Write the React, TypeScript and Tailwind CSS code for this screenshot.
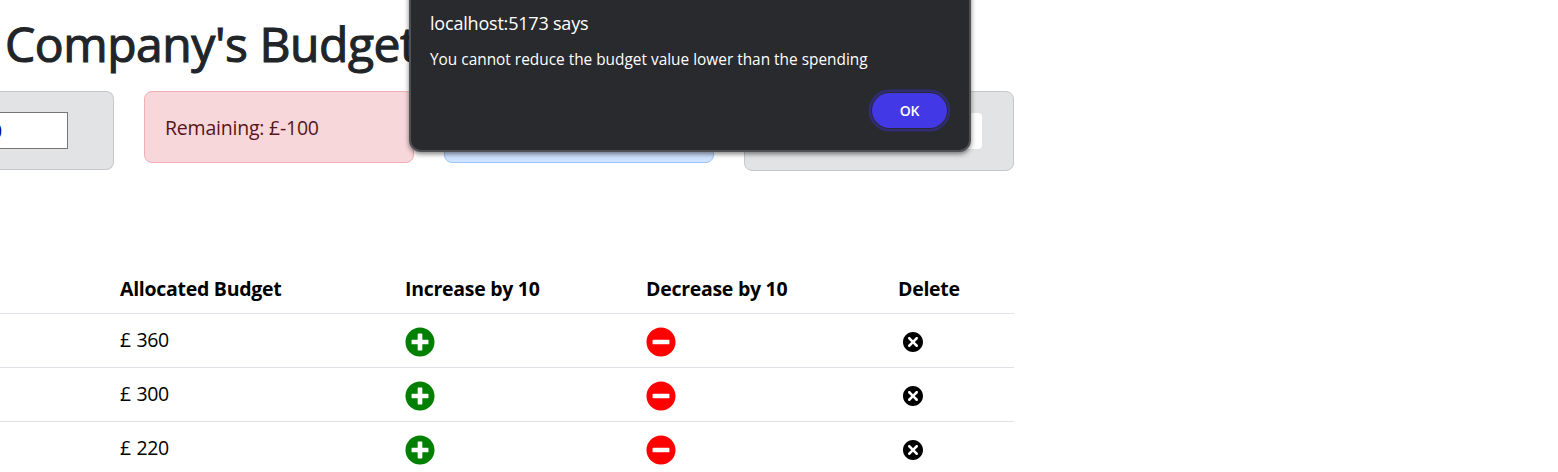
import { FaPlusCircle, FaMinusCircle } from "react-icons/fa";
import { TiDelete } from "react-icons/ti";

const rows = [360, 300, 220];

export default function App() {
  return (
    <div className="relative h-[472px] w-full overflow-hidden bg-white font-['Open_Sans','Noto_Sans',sans-serif] text-[19.5px] leading-[30px] tracking-[-0.22px] text-[#212529]">
      <h1 className="ml-[5px] h-[91px] pt-[14px] text-[48px] leading-[60px] font-medium tracking-[-0.45px] whitespace-nowrap [-webkit-text-stroke:1.1px_#212529]">Company's Budget</h1>
      <div className="flex h-[175px] w-[1014px] items-start gap-[30px]">
        <div className="flex h-[79px] w-[114px] shrink-0 items-center rounded-r-[8px] border border-l-0 border-[#c4c8cb] bg-[#e2e3e5]">
          <div className="flex h-[37px] w-[68px] items-center border border-l-0 border-[#767676] bg-white">
            <span className="-ml-[9px] w-[12px] text-[#00008b]">0</span>
          </div>
        </div>
        <div className="h-[72px] w-[270px] shrink-0 rounded-[8px] border border-[#f1aeb5] bg-[#f8d7da] px-5 pt-[21px] text-[#58151c]">
          <span>Remaining: £-100</span>
        </div>
        <div className="h-[72px] w-[270px] shrink-0 rounded-[8px] border border-[#9ec5fe] bg-[#cfe2ff]" />
        <div className="flex h-[80px] w-[270px] shrink-0 items-start justify-end rounded-[8px] border border-[#c4c8cb] bg-[#e2e3e5] pt-[21px] pr-[31px]">
          <div className="h-[36px] w-[150px] rounded-[4px] bg-white" />
        </div>
      </div>
      <table className="w-[1014px] table-fixed border-collapse text-left text-black">
        <colgroup>
          <col className="w-[110px]" />
          <col className="w-[285px]" />
          <col className="w-[241px]" />
          <col className="w-[252px]" />
          <col className="w-[126px]" />
        </colgroup>
        <thead>
          <tr className="h-[47px] border-b border-[#dee2e6] align-top tracking-[-0.28px]">
            <th />
            <th className="px-[10px] pt-[8px] font-bold"><span>Allocated Budget</span></th>
            <th className="px-[10px] pt-[8px] font-bold"><span>Increase by 10</span></th>
            <th className="px-[10px] pt-[8px] font-bold"><span>Decrease by 10</span></th>
            <th className="px-[10px] pt-[8px] font-bold"><span>Delete</span></th>
          </tr>
        </thead>
        <tbody>
          {rows.map((amount) => (
            <tr key={amount} className="h-[54px] border-b border-[#dee2e6] align-top">
              <td />
              <td className="px-[10px] pt-[11px] tracking-[-0.4px] [word-spacing:1px]"><span>£ {amount}</span></td>
              <td className="px-[10px] pt-[13px]"><FaPlusCircle className="block size-[30px] text-[#008000]" /></td>
              <td className="px-[10px] pt-[13px]"><FaMinusCircle className="block size-[30px] text-[#ff0000]" /></td>
              <td className="px-[10px] pt-[13px]"><TiDelete className="block size-[30px]" /></td>
            </tr>
          ))}
        </tbody>
      </table>
      <div role="alertdialog" className="absolute -top-5 left-[409px] flex h-[172px] w-[562px] flex-col rounded-[12px] border-2 border-[#505153] bg-[#292a2d] pl-[19px] tracking-normal text-white shadow-[0_2px_5px_rgba(0,0,0,0.5)]">
        <p className="mt-[28px] text-[18px] leading-[26px] tracking-[-0.2px]">localhost:5173 says</p>
        <p className="mt-[13px] text-[15.4px] leading-[22px]">You cannot reduce the budget value lower than the spending</p>
        <button className="mt-[22px] mr-[22px] h-[35px] w-[75px] self-end rounded-full bg-[#4338e6] text-[14px] font-semibold tracking-[-0.2px] ring-[2.5px] ring-[#312d75] ring-offset-1 ring-offset-[#292a2d]">OK</button>
      </div>
    </div>
  );
}
